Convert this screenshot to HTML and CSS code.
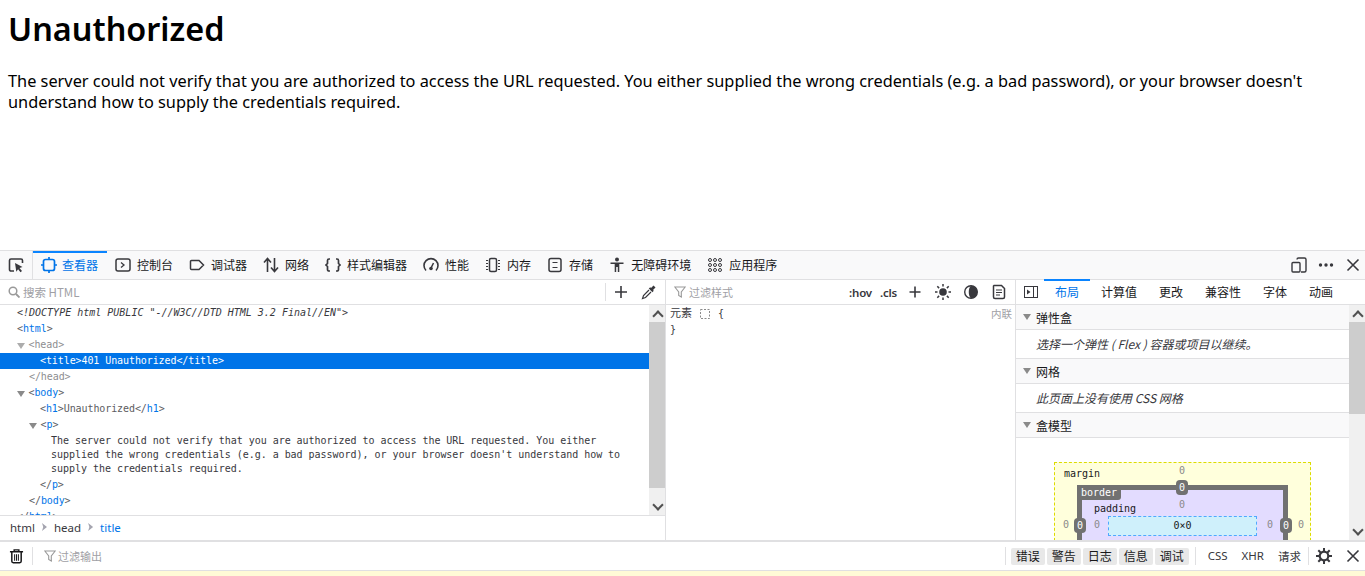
FILE: index.html
```html
<!DOCTYPE html>
<html lang="zh">
<head>
<meta charset="utf-8">
<title>401 Unauthorized</title>
<link rel="stylesheet" href="styles.css">
</head>
<body>
<main class="page">
  <h1>Unauthorized</h1>
  <p>The server could not verify that you are authorized to access the URL requested. You either supplied the wrong credentials (e.g. a bad password), or your browser doesn't understand how to supply the credentials required.</p>
</main>
<section class="toolbox">
  <header class="tabbar">
    <button class="pick"><svg class="ic" viewBox="0 0 16 16"><path d="M6 14H3a1.500 1.500 0 0 1-1.500-1.500v-9A1.500 1.500 0 0 1 3 2h10a1.500 1.500 0 0 1 1.500 1.500V6" fill="none" stroke="#38383d" stroke-width="1.600"/><path d="M7 6l7.500 4-3 1 2.500 3-1.500 1.200-2.400-3-1.800 2.600z" fill="#38383d"/></svg></button>
    <div class="tab active"><svg class="ic" viewBox="0 0 16 16"><rect x="2.500" y="2.500" width="11" height="11" rx="2" fill="none" stroke="#0074e8" stroke-width="1.700"/><path d="M8 0v2.500M8 13.500V16M0 8h2.500M13.500 8H16" stroke="#0074e8" stroke-width="1.700"/></svg><span>查看器</span></div>
    <div class="tab"><svg class="ic" viewBox="0 0 16 16"><rect x="1" y="2" width="14" height="12" rx="2" fill="none" stroke="#38383d" stroke-width="1.500"/><path d="M6 5.500L9 8l-3 2.500" fill="none" stroke="#38383d" stroke-width="1.300"/></svg><span>控制台</span></div>
    <div class="tab"><svg class="ic" viewBox="0 0 16 16"><path d="M2.500 3.500h7.500l4.500 4.500-4.500 4.500H2.500a1 1 0 0 1-1-1v-7a1 1 0 0 1 1-1z" fill="none" stroke="#38383d" stroke-width="1.500"/></svg><span>调试器</span></div>
    <div class="tab"><svg class="ic" viewBox="0 0 16 16"><path d="M4.500 15V2M1 5.500l3.500-4 3.500 4M11.500 1v13M8 10.500l3.500 4 3.500-4" fill="none" stroke="#38383d" stroke-width="1.600"/></svg><span>网络</span></div>
    <div class="tab"><svg class="ic" viewBox="0 0 16 16"><path d="M5 2H4a1.500 1.500 0 0 0-1.500 1.500v3L1 8l1.500 1.500v3A1.500 1.500 0 0 0 4 14h1M11 2h1a1.500 1.500 0 0 1 1.500 1.500v3L15 8l-1.500 1.500v3A1.500 1.500 0 0 1 12 14h-1" fill="none" stroke="#38383d" stroke-width="1.700"/></svg><span>样式编辑器</span></div>
    <div class="tab"><svg class="ic" viewBox="0 0 16 16"><path d="M3 13.500a7 7 0 1 1 10 0" fill="none" stroke="#38383d" stroke-width="1.600"/><path d="M8 11l2.500-5" stroke="#38383d" stroke-width="1.500"/><circle cx="8" cy="11.500" r="1.800" fill="#38383d"/></svg><span>性能</span></div>
    <div class="tab"><svg class="ic" viewBox="0 0 16 16"><rect x="4.500" y="1.500" width="7" height="13" rx="1.500" fill="none" stroke="#38383d" stroke-width="1.500"/><path d="M1 3.500h2M1 6.500h2M1 9.500h2M1 12.500h2M13 3.500h2M13 6.500h2M13 9.500h2M13 12.500h2" stroke="#38383d"/></svg><span>内存</span></div>
    <div class="tab"><svg class="ic" viewBox="0 0 16 16"><rect x="2" y="1.500" width="12" height="13" rx="2" fill="none" stroke="#38383d" stroke-width="1.500"/><path d="M5.500 5.500h5M5.500 10.500h5" stroke="#38383d" stroke-width="1.200"/></svg><span>存储</span></div>
    <div class="tab"><svg class="ic" viewBox="0 0 16 16"><circle cx="8" cy="2.500" r="2" fill="#38383d"/><path d="M1.500 5.500h13v1.600H10.300V15H8.800v-5H7.200v5H5.700V7.100H1.500z" fill="#38383d"/></svg><span>无障碍环境</span></div>
    <div class="tab"><svg class="ic" viewBox="0 0 16 16"><g fill="none" stroke="#38383d"><circle cx="3" cy="3" r="1.500"/><circle cx="8" cy="3" r="1.500"/><circle cx="13" cy="3" r="1.500"/><circle cx="3" cy="8" r="1.500"/><circle cx="8" cy="8" r="1.500"/><circle cx="13" cy="8" r="1.500"/><circle cx="3" cy="13" r="1.500"/><circle cx="8" cy="13" r="1.500"/><circle cx="13" cy="13" r="1.500"/></g></svg><span>应用程序</span></div>
    <div class="tabbar-end">
      <svg class="ic" viewBox="0 0 16 16"><path d="M6 2.500A1.500 1.500 0 0 1 7.500 1h6A1.500 1.500 0 0 1 15 2.500v11a1.500 1.500 0 0 1-1.500 1.500H10" fill="none" stroke="#38383d" stroke-width="1.400"/><rect x="1" y="5.500" width="8" height="9.500" rx="1" fill="none" stroke="#38383d" stroke-width="1.400"/></svg>
      <svg class="ic" viewBox="0 0 16 16"><circle cx="2.500" cy="8" r="1.700" fill="#38383d"/><circle cx="8" cy="8" r="1.700" fill="#38383d"/><circle cx="13.500" cy="8" r="1.700" fill="#38383d"/></svg>
      <svg class="ic" viewBox="0 0 16 16"><path d="M2.500 2.500l11 11M13.500 2.500l-11 11" stroke="#38383d" stroke-width="1.600"/></svg>
    </div>
  </header>
  <div class="panes">
    <section class="pane-markup">
      <div class="bar">
        <svg class="ic sm" viewBox="0 0 12 12"><circle cx="5" cy="5" r="3.800" fill="none" stroke="#999" stroke-width="1.500"/><path d="M8 8l3.500 3.500" stroke="#999" stroke-width="1.800"/></svg>
        <span class="placeholder search">搜索 HTML</span>
        <span class="bar-fill"></span>
        <span class="sep"></span>
        <svg class="ic plus" viewBox="0 0 16 16"><path d="M8 2v12M2 8h12" stroke="#38383d" stroke-width="1.600"/></svg>
        <svg class="ic drop" viewBox="0 0 16 16"><path d="M12.500 1.500l2 2-2.500 2.500.8.8-1.400 1.400-3.600-3.600 1.400-1.400.8.8z" fill="#38383d"/><path d="M8 6L2.500 11.500 1.500 14.500l3-1L10 8" fill="none" stroke="#38383d" stroke-width="1.200"/></svg>
      </div>
      <div class="scroller">
        <div class="tree">
          <div class="row d0 doctype">&lt;!DOCTYPE html PUBLIC "-//W3C//DTD HTML 3.2 Final//EN"&gt;</div>
          <div class="row d0">&lt;<b>html</b>&gt;</div>
          <div class="row d0 dim"><i class="tw"></i>&lt;head&gt;</div>
          <div class="row d2 sel">&lt;title&gt;401 Unauthorized&lt;/title&gt;</div>
          <div class="row d1 dim">&lt;/head&gt;</div>
          <div class="row d0"><i class="tw"></i>&lt;<b>body</b>&gt;</div>
          <div class="row d2">&lt;<b>h1</b>&gt;Unauthorized&lt;/<b>h1</b>&gt;</div>
          <div class="row d1"><i class="tw"></i>&lt;<b>p</b>&gt;</div>
          <div class="row-text">The server could not verify that you are authorized to access the URL requested. You either supplied the wrong credentials (e.g. a bad password), or your browser doesn't understand how to supply the credentials required.</div>
          <div class="row d2">&lt;/<b>p</b>&gt;</div>
          <div class="row d1">&lt;/<b>body</b>&gt;</div>
          <div class="row d0">&lt;/<b>html</b>&gt;</div>
        </div>
        <div class="sb"><span class="arrow up"></span><span class="thumb t-left"></span><span class="sb-fill"></span><span class="arrow down"></span></div>
      </div>
      <nav class="crumbs"><span>html</span><i class="chev"></i><span>head</span><i class="chev"></i><span class="cur">title</span></nav>
    </section>
    <section class="pane-rules">
      <div class="bar">
        <svg class="ic sm" viewBox="0 0 12 12"><path d="M.8 1h10.400L7.300 6v5L4.700 9.500V6z" fill="none" stroke="#999" stroke-width="1.100"/></svg>
        <span class="placeholder search cjk">过滤样式</span>
        <span class="bar-fill"></span>
        <span class="pseudo">:hov</span><span class="pseudo cls">.cls</span>
        <svg class="ic r-ic" viewBox="0 0 16 16"><path d="M8 2.500v11M2.500 8h11" stroke="#38383d" stroke-width="1.600"/></svg>
        <svg class="ic r-ic" viewBox="0 0 16 16"><circle cx="8" cy="8" r="3.800" fill="#38383d"/><path d="M8 0v2.500M8 13.500V16M0 8h2.500M13.500 8H16M2.300 2.300l1.800 1.800M11.900 11.900l1.800 1.800M2.300 13.700l1.800-1.800M11.900 4.100l1.800-1.800" stroke="#38383d" stroke-width="1.500"/></svg>
        <svg class="ic r-ic" viewBox="0 0 16 16"><circle cx="8" cy="8" r="6.300" fill="none" stroke="#38383d" stroke-width="1.400"/><path d="M8 1.700a6.300 6.300 0 0 1 0 12.600c-3-2-3-10.600 0-12.600z" fill="#38383d"/></svg>
        <svg class="ic r-ic" viewBox="0 0 16 16"><path d="M3 1.500h7.500l3 3V13a1.500 1.500 0 0 1-1.500 1.500H4A1.500 1.500 0 0 1 2.500 13V2z" fill="none" stroke="#38383d" stroke-width="1.500"/><path d="M5 6h6M5 8.500h6M5 11h4" stroke="#38383d" stroke-width="1.200"/></svg>
      </div>
      <div class="rule">
        <div class="rule-head"><span class="el">元素</span><svg class="dots" viewBox="0 0 10 10"><path d="M.5.500h9v9h-9z" fill="none" stroke="#8a8a8a" stroke-dasharray="2 1.500"/></svg><span class="brace">{</span><span class="inline">内联</span></div>
        <div class="brace">}</div>
      </div>
    </section>
    <section class="pane-side">
      <div class="bar side-tabs">
        <svg class="ic toggle" viewBox="0 0 16 16"><rect x="1.500" y="2.500" width="13" height="11" fill="none" stroke="#38383d"/><path d="M10.500 2.500v11" stroke="#38383d"/><path d="M4 5.500L7.500 8 4 10.500z" fill="#38383d"/></svg>
        <span class="stab active">布局</span><span class="stab">计算值</span><span class="stab">更改</span><span class="stab">兼容性</span><span class="stab">字体</span><span class="stab">动画</span>
      </div>
      <div class="scroller">
        <div class="layout">
          <h3 class="acc"><i class="tw"></i>弹性盒</h3>
          <div class="acc-body">选择一个弹性 ( Flex ) 容器或项目以继续。</div>
          <h3 class="acc"><i class="tw"></i>网格</h3>
          <div class="acc-body">此页面上没有使用 CSS 网格</div>
          <h3 class="acc"><i class="tw"></i>盒模型</h3>
          <div class="boxmodel">
            <div class="bm-margin">
              <span class="lbl l-margin">margin</span>
              <span class="val v-mt">0</span><span class="val v-ml">0</span><span class="val v-mr">0</span>
              <div class="bm-border">
                <span class="lbl l-border">border</span>
                <span class="badge b-t">0</span><span class="badge b-l">0</span><span class="badge b-r">0</span>
                <div class="bm-padding">
                  <span class="lbl l-padding">padding</span>
                  <span class="val v-pt">0</span><span class="val v-pl">0</span><span class="val v-pr">0</span>
                  <div class="bm-content">0×0</div>
                </div>
              </div>
            </div>
          </div>
        </div>
        <div class="sb"><span class="arrow up"></span><span class="thumb t-right"></span><span class="sb-fill"></span><span class="arrow down"></span></div>
      </div>
    </section>
  </div>
  <footer class="console">
    <svg class="ic trash" viewBox="0 0 16 16"><path d="M1 3.500h14M5.500 3V1.500h5V3" fill="none" stroke="#18181a" stroke-width="1.500"/><path d="M3 3.500v10.200A1.500 1.500 0 0 0 4.500 15.200h7a1.500 1.500 0 0 0 1.500-1.500V3.500" fill="none" stroke="#18181a" stroke-width="1.600"/><path d="M6 6v7M8 6v7M10 6v7" stroke="#18181a" stroke-width="1.100"/></svg>
    <span class="sep con-sep"></span>
    <svg class="ic sm" viewBox="0 0 12 12"><path d="M.8 1h10.400L7.300 6v5L4.700 9.500V6z" fill="none" stroke="#999" stroke-width="1.100"/></svg>
    <span class="placeholder cjk con-search">过滤输出</span>
    <span class="bar-fill"></span>
    <span class="sep"></span>
    <div class="levels"><span>错误</span><span>警告</span><span>日志</span><span>信息</span><span>调试</span></div>
    <span class="sep"></span>
    <div class="kinds"><span>CSS</span><span>XHR</span><span>请求</span></div>
    <span class="sep"></span>
    <svg class="ic gear" viewBox="0 0 16 16"><circle cx="8" cy="8" r="4.300" fill="none" stroke="#38383d" stroke-width="2.200"/><path d="M8 0v3.500M8 12.500V16M0 8h3.500M12.500 8H16M2.300 2.300l2.500 2.500M11.200 11.200l2.500 2.500M2.300 13.700l2.500-2.500M11.200 4.800l2.500-2.500" stroke="#38383d" stroke-width="2"/></svg>
    <svg class="ic close" viewBox="0 0 16 16"><path d="M2.500 2.500l11 11M13.500 2.500l-11 11" stroke="#38383d" stroke-width="1.600"/></svg>
  </footer>
  <div class="warnstrip"></div>
</section>
</body>
</html>
```
FILE: styles.css
```css
* { box-sizing: border-box; }
html, body { height: 100%; margin: 0; }
body {
  display: flex;
  flex-direction: column;
  overflow: hidden;
  background: #fff;
  color: #000;
  font-family: "Noto Sans", "Noto Sans CJK SC", sans-serif;
}
.page { height: 250px; padding: 8px; flex: none; overflow: hidden; }
.page h1 { margin: 0; font-size: 32.400px; line-height: 41px; font-weight: 600; }
.page p { margin: 22px 0 0; font-size: 16.320px; line-height: 21px; }

.toolbox {
  flex: 1;
  min-height: 0;
  display: flex;
  flex-direction: column;
  border-top: 1px solid #e0e0e2;
  font-family: "Noto Sans CJK SC", "Noto Sans", sans-serif;
  font-size: 12px;
  color: #18181a;
}
.ic { width: 16px; height: 16px; flex: none; display: block; }
.ic.sm { width: 12px; height: 12px; }

.tabbar {
  height: 29px;
  flex: none;
  display: flex;
  background: #f9f9fa;
  border-bottom: 1px solid #e0e0e2;
  align-items: stretch;
}
.pick {
  width: 33px;
  padding: 0 0 0 8px;
  margin: 0;
  display: flex;
  align-items: center;
  background: none;
  border: 0;
  border-right: 1px solid #e0e0e2;
}
.tab {
  display: flex;
  align-items: center;
  gap: 6px;
  padding: 0 8px 2px;
  border-top: 2px solid transparent;
  line-height: 16px;
}
.tab.active { border-top-color: #0a84ff; color: #0074e8; padding: 0 9px 2px 8px; gap: 5px; }
.tabbar-end { margin-left: auto; display: flex; align-items: center; gap: 11px; padding-right: 4px; }

.panes { flex: 1; min-height: 0; display: flex; }
.pane-markup { width: 666px; flex: none; display: flex; flex-direction: column; border-right: 1px solid #e0e0e2; }
.pane-rules { width: 350px; flex: none; display: flex; flex-direction: column; border-right: 1px solid #e0e0e2; }
.pane-side { flex: 1; min-width: 0; display: flex; flex-direction: column; }

.bar {
  height: 25px;
  flex: none;
  display: flex;
  align-items: center;
  padding-left: 8px;
  border-bottom: 1px solid #e0e0e2;
  background: #fff;
}
.bar-fill { flex: 1; }
.placeholder { color: #a0a0a5; font-size: 11.500px; }
.placeholder.cjk { font-size: 11px; }
.search { margin-left: 3px; }
.con-search { margin-left: 2px; }
.sep { width: 1px; height: 18px; background: #e0e0e2; flex: none; }
.plus { margin-left: 7px; }
.drop { margin-left: 12px; margin-right: 8px; }
.pseudo { font-size: 11.500px; font-weight: 600; font-family: "Noto Sans", sans-serif; letter-spacing: -.2px; color: #38383d; margin-right: 8px; }
.pseudo.cls { margin-right: 10px; }
.r-ic { margin-right: 12px; }
.r-ic:last-child { margin-right: 8px; }

.scroller { flex: 1; min-height: 0; display: flex; overflow: hidden; }
.tree { flex: 1; min-width: 0; overflow: hidden; font-family: "DejaVu Sans Mono", monospace; font-size: 10px; letter-spacing: -.09px; color: #5c5c5f; }
.row { height: 16px; line-height: 16px; white-space: nowrap; }
.row b { font-weight: 400; color: #0074e8; }
.d0 { padding-left: 17px; }
.d1 { padding-left: 29px; }
.d2 { padding-left: 40px; }
.doctype { font-style: italic; color: #38383d; letter-spacing: 0; }
.dim { opacity: .7; }
.sel { background: #0074e8; color: #fff; }
.tw {
  display: inline-block;
  width: 11.500px;
  height: 6px;
  vertical-align: -1px;
  background: #8a8a8a;
  clip-path: polygon(0 0, 8px 0, 4px 6px);
}
.row-text {
  padding: 1px 28px 1px 51px;
  line-height: 14px;
  letter-spacing: -.03px;
  color: #38383d;
}
.sb { width: 16px; flex: none; display: flex; flex-direction: column; background: #f0f0f0; }
.arrow { height: 17px; flex: none; position: relative; }
.arrow::after {
  content: "";
  position: absolute;
  left: 5px;
  width: 6px;
  height: 6px;
  border: solid #505050;
  border-width: 2px 0 0 2px;
  transform: rotate(45deg);
  top: 7px;
}
.arrow.down::after { transform: rotate(225deg); top: 3px; }
.thumb { background: #cdcdcd; flex: none; }
.t-left { height: 166px; }
.t-right { height: 92px; }
.sb-fill { flex: 1; }

.crumbs {
  height: 25px;
  flex: none;
  display: flex;
  align-items: center;
  gap: 7px;
  padding: 0 0 2px 10px;
  border-top: 1px solid #e0e0e2;
  font-family: "Noto Sans", sans-serif;
  font-size: 11.500px;
  color: #38383d;
}
.crumbs .cur { color: #0074e8; }
.chev { width: 5px; height: 8px; background: #a5a5b0; clip-path: polygon(0 0, 100% 50%, 0 100%, 25% 50%); }

.rule { flex: 1; min-height: 0; padding: 0 3px 0 4px; font-size: 10px; font-family: "DejaVu Sans Mono", "Noto Sans CJK SC", monospace; line-height: 16px; }
.rule-head { display: flex; align-items: center; height: 16px; margin-top: 1px; }
.el { color: #38383d; font-size: 11px; }
.dots { width: 10px; height: 10px; margin: 0 8px; }
.brace { color: #38383d; }
.inline { margin-left: auto; color: #a0a0a5; font-size: 10.500px; }

.side-tabs { padding-left: 7px; font-size: 12px; align-items: stretch; }
.toggle { margin: 4px 5px 0 0; }
.stab { padding: 0 11px 2px; display: flex; align-items: center; border-top: 2px solid transparent; margin-top: -1px; }
.stab.active { border-top-color: #0a84ff; color: #0074e8; }
.layout { flex: 1; min-width: 0; overflow: hidden; }
.acc {
  margin: 0;
  height: 25px;
  display: flex;
  align-items: center;
  font-size: 12px;
  font-weight: 400;
  padding-left: 7px;
  background: #f9f9fa;
  border-bottom: 1px solid #e0e0e2;
}
.acc .tw { width: 13px; }
.acc-body {
  height: 29px;
  display: flex;
  align-items: center;
  padding: 0 0 2px 20px;
  font-style: italic;
  color: #38383d;
  border-bottom: 1px solid #e0e0e2;
}
.boxmodel { padding: 24px 38px 0; font-family: "DejaVu Sans Mono", monospace; font-size: 10px; }
.bm-margin {
  position: relative;
  width: 257px;
  height: 160px;
  padding: 22px 22px 0;
  background: #ffffdc;
  border: 1px dashed #dcdc00;
}
.bm-border {
  position: relative;
  height: 120px;
  background: #e3dcff;
  border: 5px solid #717171;
}
.bm-padding { position: relative; height: 100%; padding: 26px 26px 0; }
.bm-content {
  height: 20px;
  background: #cff0fb;
  border: 1px dashed #51a7ff;
  text-align: center;
  line-height: 18px;
  color: #18181a;
}
.lbl { position: absolute; color: #18181a; line-height: 12px; }
.l-margin { left: 9px; top: 5px; }
.l-border { left: -5px; top: -5px; width: 44px; height: 15px; background: #717171; color: #fff; padding-left: 4px; border-radius: 0 0 3px 0; line-height: 15px; }
.l-padding { left: 12px; top: 13px; }
.val { position: absolute; color: #8a8a8a; line-height: 12px; }
.v-mt { left: 124px; top: 2px; }
.v-ml { left: 8px; top: 56px; }
.v-mr { left: 243px; top: 56px; }
.v-pt { left: 97px; top: 9px; }
.v-pl { left: 12px; top: 29px; }
.v-pr { left: 185px; top: 29px; }
.badge { position: absolute; width: 12px; height: 15px; border-radius: 4px; background: #717171; color: #fff; text-align: center; line-height: 15px; }
.b-t { left: 94px; top: -10px; }
.b-l { left: -8px; top: 28px; }
.b-r { left: 198px; top: 28px; }

.console {
  height: 31px;
  flex: none;
  display: flex;
  align-items: center;
  padding-left: 9px;
  border-top: 2px solid #e0e0e2;
  border-bottom: 1px solid #e0e0e2;
  background: #fff;
}
.trash { width: 15px; }
.con-sep { margin: 0 11px 0 8px; }
.levels { display: flex; gap: 2px; margin: 0 6px 0 5px; }
.levels span { width: 34px; height: 17px; line-height: 16px; text-align: center; background: #e8e8e8; border-radius: 2px; font-size: 12px; }
.kinds { display: flex; gap: 14px; margin: 0 7px 0 12px; font-size: 11.500px; font-family: "Noto Sans", "Noto Sans CJK SC", sans-serif; color: #38383d; }
.gear { margin-left: 7px; }
.close { margin: 0 4px 0 13px; }
.warnstrip { flex: none; height: 5px; background: #fffbd6; }
```
